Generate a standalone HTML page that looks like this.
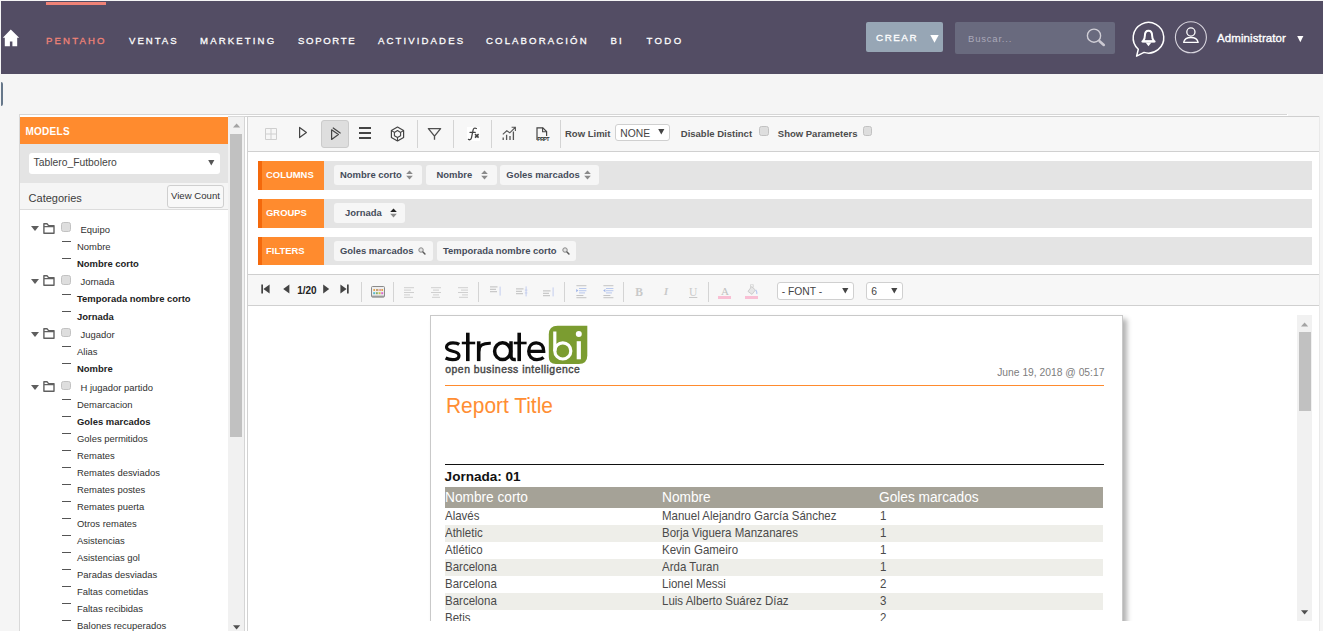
<!DOCTYPE html>
<html>
<head>
<meta charset="utf-8">
<title>Pentaho</title>
<style>
*{box-sizing:border-box;margin:0;padding:0}
html,body{width:1323px;height:631px;overflow:hidden;background:#f5f5f5;font-family:"Liberation Sans",sans-serif;}
.a{position:absolute}
.t{position:absolute;white-space:nowrap;line-height:14px;height:14px}
/* NAV */
#nav{left:1px;top:1px;width:1322px;height:73px;background:#534d64}
.nv{position:absolute;top:33px;height:16px;line-height:16px;font-size:9.6px;color:#fff;white-space:nowrap;-webkit-text-stroke:0.28px currentColor}
/* LEFT PANEL */
.tr{position:absolute;left:77px;font-size:9.45px;color:#303030;white-space:nowrap;height:14px;line-height:14px}
.tr.f{left:80.5px}
.tr.b{font-weight:bold;color:#222}
.dash{position:absolute;left:62px;width:9px;height:1px;background:#555}
.tri{position:absolute;left:31.2px;width:0;height:0;border-left:4.2px solid transparent;border-right:4.2px solid transparent;border-top:5.2px solid #5e5e5e}
.fold{position:absolute;left:42.6px;width:12px;height:11px}
.cb{position:absolute;width:9.6px;height:9.6px;border:1px solid #c2c2c2;border-radius:2.5px;background:#dedede}
/* RIGHT */
.sep{position:absolute;width:1px;background:#d4d4d4}
.lbl{position:absolute;font-size:9.5px;font-weight:bold;color:#4c4c4c;white-space:nowrap;height:14px;line-height:14px}
.bar{position:absolute;left:324px;width:988px;background:#e4e4e4}
.tag{position:absolute;left:258px;width:66px;background:#ff8b2e;border-left:4px solid #f4690c}
.tagt{position:absolute;left:266px;font-size:9.45px;font-weight:bold;color:#fff;white-space:nowrap;height:14px;line-height:14px}
.pill{position:absolute;background:#f6f6f6;border-radius:3px;height:20px}
.pt{position:absolute;font-size:9.45px;font-weight:bold;color:#454c5a;white-space:nowrap;height:14px;line-height:14px}
.sel{position:absolute;background:#fff;border:1px solid #d0d0d0;border-radius:3px}
/* REPORT */
.row{position:absolute;left:445px;width:658px;height:17px}
.c{position:absolute;font-size:11.9px;transform:scaleX(.967);transform-origin:0 0;color:#4a4a4a;white-space:nowrap;height:17px;line-height:17px}
.h{position:absolute;font-size:13.85px;transform:scaleX(.989);transform-origin:0 0;color:#fff;white-space:nowrap;height:21px;line-height:21px}
</style>
</head>
<body>
<!-- ========== NAV ========== -->
<div id="nav" class="a"></div>
<div class="a" style="left:46px;top:2px;width:60px;height:3px;background:#f08377"></div>
<svg class="a" style="left:2px;top:29px" width="18" height="18" viewBox="0 0 18 18"><path d="M8.8 0.6 L0.8 8.8 L2.8 8.8 L2.8 17.2 L7.9 17.2 L7.9 12.4 L10.4 12.4 L10.4 17.2 L15.2 17.2 L15.2 8.8 L17.2 8.8 Z" fill="#fff"/></svg>
<div class="nv" style="left:46px;color:#f08377;letter-spacing:2.15px" id="n1">PENTAHO</div>
<div class="nv" style="left:129px;letter-spacing:1.99px" id="n2">VENTAS</div>
<div class="nv" style="left:200px;letter-spacing:2.14px" id="n3">MARKETING</div>
<div class="nv" style="left:298px;letter-spacing:1.64px" id="n4">SOPORTE</div>
<div class="nv" style="left:378px;letter-spacing:2.11px" id="n5">ACTIVIDADES</div>
<div class="nv" style="left:486px;letter-spacing:2.12px" id="n6">COLABORACIÓN</div>
<div class="nv" style="left:610.5px;letter-spacing:2.02px" id="n7">BI</div>
<div class="nv" style="left:646.5px;letter-spacing:2.35px" id="n8">TODO</div>
<!-- CREAR -->
<div class="a" style="left:866px;top:22px;width:77px;height:30px;background:#97a6b5;border-radius:2px"></div>
<div class="t" style="left:876px;top:30.5px;font-size:9.9px;color:#fff;letter-spacing:1.5px;-webkit-text-stroke:0.28px #fff">CREAR</div>
<svg class="a" style="left:929.5px;top:35px" width="9" height="8" viewBox="0 0 9 8"><path d="M0.3 0 L8.7 0 L4.5 7.8 Z" fill="#fff"/></svg>
<!-- search -->
<div class="a" style="left:955px;top:22px;width:160px;height:32px;background:#696a7e;border-radius:2px"></div>
<div class="t" style="left:968px;top:31.6px;font-size:9.5px;color:#aaa9b9;letter-spacing:0.8px" id="bus">Buscar...</div>
<svg class="a" style="left:1085px;top:27px" width="23" height="22" viewBox="0 0 23 22"><circle cx="9" cy="8.7" r="6.6" fill="none" stroke="#d0ced6" stroke-width="1.4"/><path d="M14.6 14.2 L18.8 17.9" stroke="#cbc9d2" stroke-width="2.6" stroke-linecap="round"/></svg>
<!-- bell bubble -->
<svg class="a" style="left:1130px;top:19px" width="38" height="40" viewBox="0 0 38 40"><path d="M8.3 30.2 A15.3 15.3 0 1 1 14 33.4 L6.6 37.2 Z" fill="none" stroke="#fff" stroke-width="1.5" stroke-linejoin="round"/><path d="M13 22.3 C14.6 20.6 14.9 19 14.9 16.6 C14.9 13.6 16 11.7 18.5 11.7 C21 11.7 22.1 13.6 22.1 16.6 C22.1 19 22.4 20.6 24 22.3 Z" fill="none" stroke="#fff" stroke-width="2" stroke-linejoin="round"/><path d="M12.4 22.6 H24.6" stroke="#fff" stroke-width="2" stroke-linecap="round"/><path d="M15.6 23.4 L21.4 23.4 L18.5 27.2 Z" fill="#fff"/></svg>
<!-- user -->
<svg class="a" style="left:1173px;top:19px" width="36" height="38" viewBox="0 0 36 38"><circle cx="17.9" cy="18.3" r="15.5" fill="none" stroke="#d8d5de" stroke-width="1.1"/><circle cx="17.9" cy="13" r="4.1" fill="none" stroke="#fff" stroke-width="1.3"/><path d="M10.6 23.3 C11.5 19.7 14.5 18.5 17.9 18.5 C21.3 18.5 24.3 19.7 25.2 23.3 Z" fill="none" stroke="#fff" stroke-width="1.3" stroke-linejoin="round"/></svg>
<div class="t" style="left:1217px;top:31.4px;font-size:11.5px;color:#fff;letter-spacing:0.1px;-webkit-text-stroke:0.35px #fff" id="adm">Administrator</div>
<svg class="a" style="left:1296.5px;top:36.2px" width="7" height="7" viewBox="0 0 7 7"><path d="M0.2 0 L6.4 0 L3.3 6.2 Z" fill="#fff"/></svg>

<!-- small toggle -->
<div class="a" style="left:1px;top:82px;width:2.2px;height:24px;background:#66778a;border-radius:0 2px 2px 0"></div>
<!-- LEFT PANEL -->
<div class="a" style="left:19px;top:114px;width:1268px;height:517px;background:#fff;border-left:1px solid #d9d9d9;border-top:1px solid #d6d6d6"></div>
<div class="a" style="left:20px;top:117px;width:208px;height:27px;background:#ff8b2e"></div>
<div class="t" style="left:25.4px;top:125px;font-size:10px;letter-spacing:0.3px;font-weight:bold;color:#fff">MODELS</div>
<div class="a" style="left:20px;top:144px;width:208px;height:39px;background:#e4e4e4"></div>
<div class="a" style="left:28.5px;top:153px;width:191px;height:21px;background:#fff;border-radius:3px"></div>
<div class="t" style="left:33.5px;top:156.3px;font-size:10.35px;color:#444">Tablero_Futbolero</div>
<svg class="a" style="left:208px;top:160px" width="7" height="6" viewBox="0 0 7 6"><path d="M0.2 0 L6.4 0 L3.3 5.6 Z" fill="#555"/></svg>
<div class="a" style="left:20px;top:183px;width:208px;height:27px;background:#f5f5f5;border-bottom:1px solid #dcdcdc"></div>
<div class="t" style="left:28.6px;top:190.7px;font-size:11px;color:#3c3c3c">Categories</div>
<div class="a" style="left:167px;top:185px;width:57px;height:23px;background:#f8f8f8;border:1px solid #cfcfcf;border-radius:3px"></div>
<div class="t" style="left:171px;top:188.5px;font-size:9.6px;color:#333">View Count</div>
<div class="tri" style="top:226.4px"></div>
<svg class="fold" style="top:222.6px" viewBox="0 0 12 11"><path d="M0.9 10.2 L0.9 0.8 L4 0.8 L5.6 2.6 L11 2.6 L11 10.2 Z M0.9 3.6 L11 3.6" fill="none" stroke="#606060" stroke-width="1.4" stroke-linejoin="round"/></svg>
<div class="cb" style="left:61.2px;top:222.4px"></div>
<div class="tr f" style="top:222.6px">Equipo</div>
<div class="dash" style="top:241.2px"></div>
<div class="tr" style="top:240.0px">Nombre</div>
<div class="dash" style="top:258.2px"></div>
<div class="tr b" style="top:257.0px">Nombre corto</div>
<div class="tri" style="top:279.2px"></div>
<svg class="fold" style="top:275.4px" viewBox="0 0 12 11"><path d="M0.9 10.2 L0.9 0.8 L4 0.8 L5.6 2.6 L11 2.6 L11 10.2 Z M0.9 3.6 L11 3.6" fill="none" stroke="#606060" stroke-width="1.4" stroke-linejoin="round"/></svg>
<div class="cb" style="left:61.2px;top:275.2px"></div>
<div class="tr f" style="top:275.4px">Jornada</div>
<div class="dash" style="top:293.6px"></div>
<div class="tr b" style="top:292.4px">Temporada nombre corto</div>
<div class="dash" style="top:310.8px"></div>
<div class="tr b" style="top:309.6px">Jornada</div>
<div class="tri" style="top:331.8px"></div>
<svg class="fold" style="top:328.0px" viewBox="0 0 12 11"><path d="M0.9 10.2 L0.9 0.8 L4 0.8 L5.6 2.6 L11 2.6 L11 10.2 Z M0.9 3.6 L11 3.6" fill="none" stroke="#606060" stroke-width="1.4" stroke-linejoin="round"/></svg>
<div class="cb" style="left:61.2px;top:327.8px"></div>
<div class="tr f" style="top:328.0px">Jugador</div>
<div class="dash" style="top:346.2px"></div>
<div class="tr" style="top:345.0px">Alias</div>
<div class="dash" style="top:363.2px"></div>
<div class="tr b" style="top:362.0px">Nombre</div>
<div class="tri" style="top:384.8px"></div>
<svg class="fold" style="top:381.0px" viewBox="0 0 12 11"><path d="M0.9 10.2 L0.9 0.8 L4 0.8 L5.6 2.6 L11 2.6 L11 10.2 Z M0.9 3.6 L11 3.6" fill="none" stroke="#606060" stroke-width="1.4" stroke-linejoin="round"/></svg>
<div class="cb" style="left:61.2px;top:380.8px"></div>
<div class="tr f" style="top:381.0px">H jugador partido</div>
<div class="dash" style="top:399.2px"></div>
<div class="tr" style="top:398.0px">Demarcacion</div>
<div class="dash" style="top:416.2px"></div>
<div class="tr b" style="top:415.0px">Goles marcados</div>
<div class="dash" style="top:433.2px"></div>
<div class="tr" style="top:432.0px">Goles permitidos</div>
<div class="dash" style="top:450.2px"></div>
<div class="tr" style="top:449.0px">Remates</div>
<div class="dash" style="top:467.2px"></div>
<div class="tr" style="top:466.0px">Remates desviados</div>
<div class="dash" style="top:484.2px"></div>
<div class="tr" style="top:483.0px">Remates postes</div>
<div class="dash" style="top:501.2px"></div>
<div class="tr" style="top:500.0px">Remates puerta</div>
<div class="dash" style="top:518.2px"></div>
<div class="tr" style="top:517.0px">Otros remates</div>
<div class="dash" style="top:535.2px"></div>
<div class="tr" style="top:534.0px">Asistencias</div>
<div class="dash" style="top:552.2px"></div>
<div class="tr" style="top:551.0px">Asistencias gol</div>
<div class="dash" style="top:569.2px"></div>
<div class="tr" style="top:568.0px">Paradas desviadas</div>
<div class="dash" style="top:586.2px"></div>
<div class="tr" style="top:585.0px">Faltas cometidas</div>
<div class="dash" style="top:603.2px"></div>
<div class="tr" style="top:602.0px">Faltas recibidas</div>
<div class="dash" style="top:620.2px"></div>
<div class="tr" style="top:619.0px">Balones recuperados</div>
<div class="a" style="left:228px;top:116px;width:17px;height:515px;background:#f1f1f1;border-top:1px solid #d9d9d9;border-right:1px solid #d5d5d5"></div>
<div class="a" style="left:230px;top:134px;width:12.4px;height:303px;background:#c1c1c1"></div>
<svg class="a" style="left:233px;top:123px" width="8" height="5" viewBox="0 0 8 5"><path d="M0 4.6 L3.6 0.4 L7.2 4.6 Z" fill="#a3a3a3"/></svg>
<svg class="a" style="left:233px;top:624.5px" width="8" height="5" viewBox="0 0 8 5"><path d="M0 0.2 L7.2 0.2 L3.6 4.4 Z" fill="#505050"/></svg>
<!-- RIGHT PANEL -->
<div class="a" style="left:245px;top:116px;width:3px;height:1px;background:#d4d4d4"></div>
<div class="a" style="left:1287px;top:114px;width:1px;height:2px;background:#fff"></div>
<div class="a" style="left:247px;top:116px;width:1073px;height:515px;background:#fff;border-left:1px solid #d2d2d2;border-right:1px solid #e9e9e9"></div>
<div class="a" style="left:248px;top:116px;width:1071px;height:36px;background:#f7f7f7;border-top:1px solid #cfcfcf;border-bottom:1px solid #d0d0d0"></div>
<svg class="a" style="left:265px;top:128px" width="12" height="12" viewBox="0 0 12 12"><path d="M0.5 0.5 H11.5 V11.5 H0.5 Z M6 0.5 V11.5 M0.5 6 H11.5" fill="none" stroke="#cfcfcf" stroke-width="1"/></svg>
<svg class="a" style="left:298px;top:126px" width="10" height="13" viewBox="0 0 10 13"><path d="M1.6 1.4 L8.4 6.5 L1.6 11.6 Z" fill="none" stroke="#444" stroke-width="1.2" stroke-linejoin="round"/></svg>
<div class="a" style="left:321px;top:120px;width:28px;height:28px;background:#dedede;border:1px solid #cbcbcb;border-radius:3px"></div>
<svg class="a" style="left:329.5px;top:126.5px" width="12" height="14" viewBox="0 0 12 14"><path d="M1.6 2.8 L8.4 7.6 L1.6 12.4 Z" fill="none" stroke="#444" stroke-width="1.2" stroke-linejoin="round"/><path d="M3.2 1 L10.2 6" fill="none" stroke="#444" stroke-width="1.2" stroke-linecap="round"/></svg>
<div class="a" style="left:358.5px;top:127.4px;width:12.6px;height:1.6px;background:#454545"></div>
<div class="a" style="left:358.5px;top:132.2px;width:12.6px;height:1.6px;background:#454545"></div>
<div class="a" style="left:358.5px;top:137px;width:12.6px;height:1.6px;background:#454545"></div>
<svg class="a" style="left:390px;top:125.5px" width="15" height="16" viewBox="0 0 15 16"><path d="M7.5 1 L13.6 4.5 L13.6 11.5 L7.5 15 L1.4 11.5 L1.4 4.5 Z" fill="none" stroke="#444" stroke-width="1.2" stroke-linejoin="round"/><path d="M7.5 4.6 L10.6 6.4 L10.6 9.8 L7.5 11.6 L4.4 9.8 L4.4 6.4 Z M7.5 11.6 V15 M4.4 6.4 L1.4 4.5 M10.6 6.4 L13.6 4.5" fill="none" stroke="#444" stroke-width="1.1" stroke-linejoin="round"/></svg>
<div class="sep" style="left:417px;top:120px;height:28px"></div>
<div class="sep" style="left:453px;top:120px;height:28px"></div>
<div class="sep" style="left:491px;top:120px;height:28px"></div>
<div class="sep" style="left:560px;top:120px;height:28px"></div>
<svg class="a" style="left:427px;top:127px" width="15" height="14" viewBox="0 0 15 14"><path d="M1.4 1.6 L13.6 1.6 L7.5 9.2 Z M7.5 9.2 V12.8" fill="none" stroke="#505050" stroke-width="1.35" stroke-linejoin="round"/></svg>
<div class="a" style="left:467px;top:127px;width:13px;height:14px;background:#fff"></div>
<svg class="a" style="left:467px;top:127px" width="13" height="14" viewBox="0 0 13 14"><path d="M9.4 1.5 C7.6 0.5 6.4 1.4 6 3.4 L4.5 10.6 C4.1 12.6 2.9 13.2 1.4 12.4 M3 5.4 H8.2" fill="none" stroke="#444" stroke-width="1.25" stroke-linecap="round"/><path d="M8 7.2 L11.6 10.6 M11.6 7.2 L8 10.6" stroke="#444" stroke-width="1.6"/></svg>
<svg class="a" style="left:501.5px;top:126px" width="15" height="15" viewBox="0 0 15 15"><path d="M1.2 14 V11.4 M4.6 14 V8.8 M8 14 V10 M11.4 14 V5.6" stroke="#555" stroke-width="1.3" fill="none"/><path d="M0.8 8.4 L4.8 4.8 L7.8 6.8 L13 1.6 M9.6 1.2 H13.4 V5" stroke="#555" stroke-width="1.1" fill="none"/></svg>
<svg class="a" style="left:535.5px;top:126.5px" width="14" height="15" viewBox="0 0 14 15"><path d="M1 13 V0.8 H6.8 L10.6 4.6 V9" fill="none" stroke="#444" stroke-width="1.2"/><path d="M6.6 0.8 V4.8 H10.6" fill="none" stroke="#444" stroke-width="1.1"/><text x="1.2" y="14.2" font-family="Liberation Sans" font-size="5.4" font-weight="bold" fill="#333" textLength="12.4">PRPT</text></svg>
<div class="lbl" style="left:565px;top:126.8px">Row Limit</div>
<div class="sel" style="left:615px;top:124px;width:54.5px;height:17px"></div>
<div class="t" style="left:620.3px;top:126.7px;font-size:10.3px;color:#444">NONE</div>
<svg class="a" style="left:658px;top:129.2px" width="7" height="6" viewBox="0 0 7 6"><path d="M0.2 0 L6.4 0 L3.3 5.4 Z" fill="#444"/></svg>
<div class="lbl" style="left:680.8px;top:126.8px">Disable Distinct</div>
<div class="cb" style="left:759.3px;top:126.3px"></div>
<div class="lbl" style="left:777.8px;top:126.8px">Show Parameters</div>
<div class="cb" style="left:862.8px;top:126.3px"></div>
<div class="tag" style="top:161px;height:29px"></div>
<div class="bar" style="top:161px;height:29px"></div>
<div class="tagt" style="top:167.8px">COLUMNS</div>
<div class="tag" style="top:199px;height:29px"></div>
<div class="bar" style="top:199px;height:29px"></div>
<div class="tagt" style="top:205.8px">GROUPS</div>
<div class="tag" style="top:237px;height:28px"></div>
<div class="bar" style="top:237px;height:28px"></div>
<div class="tagt" style="top:243.6px">FILTERS</div>
<div class="pill" style="left:334px;top:165px;width:88px"></div><div class="pt" style="left:340px;top:168px">Nombre corto</div><svg class="a" style="left:406px;top:170px" width="7" height="10" viewBox="0 0 7 10"><path d="M0.2 4 L3.5 0.4 L6.8 4 Z" fill="#8a8a8a"/><path d="M0.2 5.8 L6.8 5.8 L3.5 9.4 Z" fill="#8a8a8a"/></svg>
<div class="pill" style="left:426px;top:165px;width:70.5px"></div><div class="pt" style="left:436.5px;top:168px">Nombre</div><svg class="a" style="left:481px;top:170px" width="7" height="10" viewBox="0 0 7 10"><path d="M0.2 4 L3.5 0.4 L6.8 4 Z" fill="#8a8a8a"/><path d="M0.2 5.8 L6.8 5.8 L3.5 9.4 Z" fill="#8a8a8a"/></svg>
<div class="pill" style="left:500.3px;top:165px;width:98.7px"></div><div class="pt" style="left:506.3px;top:168px">Goles marcados</div><svg class="a" style="left:583.6px;top:170px" width="7" height="10" viewBox="0 0 7 10"><path d="M0.2 4 L3.5 0.4 L6.8 4 Z" fill="#8a8a8a"/><path d="M0.2 5.8 L6.8 5.8 L3.5 9.4 Z" fill="#8a8a8a"/></svg>
<div class="pill" style="left:334px;top:203px;width:71.2px"></div><div class="pt" style="left:345px;top:206px">Jornada</div><svg class="a" style="left:390px;top:208px" width="7" height="10" viewBox="0 0 7 10"><path d="M0.2 4 L3.5 0.4 L6.8 4 Z" fill="#222"/><path d="M0.2 5.8 L6.8 5.8 L3.5 9.4 Z" fill="#8a8a8a"/></svg>
<div class="pill" style="left:334px;top:241px;width:99px"></div><div class="pt" style="left:340px;top:244px">Goles marcados</div><svg class="a" style="left:418px;top:246.5px" width="8" height="8" viewBox="0 0 9 9"><circle cx="3.4" cy="3.4" r="2.5" fill="#e4e4e4" stroke="#858585" stroke-width="1.1"/><path d="M5.6 5.6 L7.8 7.8" stroke="#5a5a5a" stroke-width="1.7" stroke-linecap="round"/></svg>
<div class="pill" style="left:437px;top:241px;width:139px"></div><div class="pt" style="left:443px;top:244px">Temporada nombre corto</div><svg class="a" style="left:561.5px;top:246.5px" width="8" height="8" viewBox="0 0 9 9"><circle cx="3.4" cy="3.4" r="2.5" fill="#e4e4e4" stroke="#858585" stroke-width="1.1"/><path d="M5.6 5.6 L7.8 7.8" stroke="#5a5a5a" stroke-width="1.7" stroke-linecap="round"/></svg>
<div class="a" style="left:248px;top:274px;width:1071px;height:32px;background:#f7f7f7;border-top:1px solid #cfcfcf;border-bottom:1px solid #d0d0d0"></div>
<svg class="a" style="left:260.5px;top:284px" width="9" height="10" viewBox="0 0 9 10"><path d="M0.3 0.4 H2 V9.4 H0.3 Z M8.6 0.4 V9.4 L2.4 4.9 Z" fill="#444"/></svg>
<svg class="a" style="left:282.5px;top:284px" width="7" height="10" viewBox="0 0 7 10"><path d="M6.4 0.4 V9.4 L0.2 4.9 Z" fill="#444"/></svg>
<div class="t" style="left:297.2px;top:283.7px;font-size:10px;font-weight:bold;color:#222">1/20</div>
<svg class="a" style="left:322.6px;top:284px" width="7" height="10" viewBox="0 0 7 10"><path d="M0.2 0.4 V9.4 L6.2 4.9 Z" fill="#444"/></svg>
<svg class="a" style="left:340.3px;top:284px" width="9" height="10" viewBox="0 0 9 10"><path d="M7 0.4 H8.7 V9.4 H7 Z M0.4 0.4 V9.4 L6.6 4.9 Z" fill="#444"/></svg>
<div class="sep" style="left:361px;top:282px;height:20px"></div>
<div class="sep" style="left:393px;top:282px;height:20px"></div>
<div class="sep" style="left:478px;top:282px;height:20px"></div>
<div class="sep" style="left:564px;top:282px;height:20px"></div>
<div class="sep" style="left:623px;top:282px;height:20px"></div>
<div class="sep" style="left:708px;top:282px;height:20px"></div>
<svg class="a" style="left:370.5px;top:286px" width="14" height="12" viewBox="0 0 14 12"><rect x="0.5" y="0.5" width="13" height="10.6" rx="1" fill="#eee" stroke="#8a8a8a" stroke-width="1"/><rect x="1" y="9.6" width="12" height="1.6" fill="#9a9a9a"/><rect x="2.4" y="3" width="1.6" height="2" fill="#e6a44a"/><rect x="5" y="3" width="2.4" height="2" fill="#c8a070"/><rect x="8.4" y="3" width="1.4" height="2" fill="#d88"/><rect x="10.4" y="3" width="1.6" height="2" fill="#e6a44a"/><rect x="2.2" y="6.2" width="2" height="2" fill="#5bc"/><rect x="5" y="6.2" width="1.8" height="2" fill="#8a6"/><rect x="7.6" y="6.2" width="2" height="2" fill="#c6c64a"/><rect x="10.2" y="6.2" width="2" height="2" fill="#d6c"/></svg>
<svg class="a" style="left:404px;top:287px" width="10" height="11" viewBox="0 0 10 11"><rect x="0" y="0.2" width="10" height="1" fill="#cfcfcf"/><rect x="0" y="2.6" width="7" height="1" fill="#cfcfcf"/><rect x="0" y="5.0" width="10" height="1" fill="#cfcfcf"/><rect x="0" y="7.3999999999999995" width="6" height="1" fill="#cfcfcf"/><rect x="0" y="9.799999999999999" width="9" height="1" fill="#cfcfcf"/></svg>
<svg class="a" style="left:431px;top:287px" width="10" height="11" viewBox="0 0 10 11"><rect x="0.0" y="0.2" width="10" height="1" fill="#cfcfcf"/><rect x="2.0" y="2.6" width="6" height="1" fill="#cfcfcf"/><rect x="0.0" y="5.0" width="10" height="1" fill="#cfcfcf"/><rect x="2.0" y="7.3999999999999995" width="6" height="1" fill="#cfcfcf"/><rect x="1.0" y="9.799999999999999" width="8" height="1" fill="#cfcfcf"/></svg>
<svg class="a" style="left:458px;top:287px" width="10" height="11" viewBox="0 0 10 11"><rect x="0" y="0.2" width="10" height="1" fill="#cfcfcf"/><rect x="3" y="2.6" width="7" height="1" fill="#cfcfcf"/><rect x="0" y="5.0" width="10" height="1" fill="#cfcfcf"/><rect x="4" y="7.3999999999999995" width="6" height="1" fill="#cfcfcf"/><rect x="1" y="9.799999999999999" width="9" height="1" fill="#cfcfcf"/></svg>
<svg class="a" style="left:490px;top:286px" width="12" height="12" viewBox="0 0 12 12"><rect x="0" y="0.4" width="7.5" height="1" fill="#bdbdbd"/><rect x="0" y="2.8" width="6" height="1" fill="#bdbdbd"/><rect x="0" y="5.2" width="7" height="1" fill="#bdbdbd"/><rect x="9.6" y="0.6" width="1" height="9" fill="#c3cdee"/></svg>
<svg class="a" style="left:516px;top:286px" width="12" height="12" viewBox="0 0 12 12"><rect x="0" y="2.4" width="7.5" height="1" fill="#bdbdbd"/><rect x="0" y="4.8" width="6" height="1" fill="#bdbdbd"/><rect x="0" y="7.2" width="7" height="1" fill="#bdbdbd"/><rect x="9.6" y="0.4" width="1" height="10" fill="#c3cdee"/><rect x="8.8" y="3.6" width="2.6" height="1" fill="#c3cdee"/><rect x="8.8" y="6.4" width="2.6" height="1" fill="#c3cdee"/></svg>
<svg class="a" style="left:543px;top:286px" width="12" height="12" viewBox="0 0 12 12"><rect x="0" y="4.4" width="7.5" height="1" fill="#bdbdbd"/><rect x="0" y="6.8" width="6" height="1" fill="#bdbdbd"/><rect x="0" y="9.2" width="7" height="1" fill="#bdbdbd"/><rect x="9.6" y="1.4" width="1" height="9" fill="#c3cdee"/></svg>
<svg class="a" style="left:575.8px;top:285px" width="11" height="14" viewBox="0 0 11 14"><rect x="0.4" y="0.2" width="10" height="1" fill="#c4c4c4"/><rect x="0.4" y="12.2" width="10" height="1" fill="#c4c4c4"/><rect x="0.4" y="10" width="7" height="1" fill="#c4c4c4"/><rect x="3" y="3" width="7.4" height="1" fill="#b9c9ee"/><rect x="3" y="5.2" width="7.4" height="1" fill="#b9c9ee"/><rect x="3" y="7.4" width="6" height="1" fill="#b9c9ee"/><path d="M0.2 4 L2.4 5.6 L0.2 7.2 Z" fill="#9fb4e8"/></svg>
<svg class="a" style="left:602.6px;top:285px" width="11" height="14" viewBox="0 0 11 14"><rect x="0.4" y="0.2" width="10" height="1" fill="#c4c4c4"/><rect x="0.4" y="12.2" width="10" height="1" fill="#c4c4c4"/><rect x="0.4" y="10" width="7" height="1" fill="#c4c4c4"/><rect x="3" y="3" width="7.4" height="1" fill="#b9c9ee"/><rect x="3" y="5.2" width="7.4" height="1" fill="#b9c9ee"/><rect x="3" y="7.4" width="6" height="1" fill="#b9c9ee"/><path d="M2.4 4 L0.2 5.6 L2.4 7.2 Z" fill="#9fb4e8"/></svg>
<div class="t" style="left:635.2px;top:285px;font-family:'Liberation Serif',serif;font-weight:bold;font-size:11.5px;color:#c9c9c9">B</div>
<div class="t" style="left:664px;top:285px;font-family:'Liberation Serif',serif;font-style:italic;font-weight:bold;font-size:10.5px;color:#c9c9c9">I</div>
<div class="t" style="left:689px;top:285px;font-family:'Liberation Serif',serif;font-size:11.5px;color:#c9c9c9;text-decoration:underline">U</div>
<div class="t" style="left:721px;top:283.5px;font-family:'Liberation Serif',serif;font-size:11px;color:#c0c0c0">A</div>
<div class="a" style="left:718px;top:296.2px;width:13px;height:2.6px;background:#f9bfd4"></div>
<svg class="a" style="left:746px;top:284px" width="12" height="12" viewBox="0 0 12 12"><path d="M2 7.4 L5.6 2.6 L9.4 6 L6 10.4 Z" fill="#e6e6e6" stroke="#c8c8c8" stroke-width="0.9"/><path d="M4.6 4 V0.8 A1.4 1.4 0 0 1 7.2 0.8 V3.6" fill="none" stroke="#cfcfcf" stroke-width="0.9"/><path d="M9.6 5.8 Q11.4 8 10.6 10" fill="none" stroke="#b9c9ee" stroke-width="1.2"/></svg>
<div class="a" style="left:745px;top:296.2px;width:13px;height:2.6px;background:#f9bfd4"></div>
<div class="sel" style="left:776.5px;top:282px;width:77px;height:17.5px"></div>
<div class="t" style="left:781.7px;top:284.8px;font-size:10.3px;color:#444">- FONT -</div>
<svg class="a" style="left:842.3px;top:287.8px" width="7" height="6" viewBox="0 0 7 6"><path d="M0.2 0 L6.4 0 L3.3 5.4 Z" fill="#444"/></svg>
<div class="sel" style="left:865.5px;top:282px;width:37px;height:17.5px"></div>
<div class="t" style="left:871.2px;top:284.8px;font-size:10.3px;color:#444">6</div>
<svg class="a" style="left:891px;top:287.8px" width="7" height="6" viewBox="0 0 7 6"><path d="M0.2 0 L6.4 0 L3.3 5.4 Z" fill="#444"/></svg>
<!-- REPORT -->
<div class="a" id="vp" style="left:248px;top:306px;width:1049px;height:315px;overflow:hidden">
<div class="a" style="left:182px;top:9px;width:693px;height:400px;background:#fff;border:1px solid #c9c9c9;box-shadow:4px 4px 5px rgba(0,0,0,0.3)"></div>
<svg class="a" style="left:192px;top:16px" width="150" height="54" viewBox="0 0 150 54"><g fill="none" stroke="#0a0a0a" stroke-width="3.5">
<path d="M19.2 22.4 C17.6 21.2 15.6 20.8 13 20.8 C9 20.8 6.5 22.5 6.5 25.1 C6.5 27.7 9.4 28.6 12.7 29.3 C16 30 19 31 19 33.7 C19 36.4 16.2 37.6 12.5 37.6 C9.8 37.6 7.6 37.1 5.6 36" stroke-width="3.2"/>
<path d="M27.8 10.7 V39.1" stroke-width="3.6"/><path d="M21.8 21 H35.2" stroke-width="2.6"/>
<path d="M38.7 19.3 V39.1" stroke-width="3.6"/><path d="M38.7 29.5 C38.7 23.6 42.8 21 50.8 21.2" stroke-width="3"/>
<ellipse cx="62.6" cy="29.2" rx="8" ry="8.4"/>
<path d="M71 19.3 V33.8 C71 36.8 72.4 37.8 75.8 37.5"/>
<path d="M79.2 10.7 V39.1" stroke-width="3.6"/><path d="M73.8 21 H86.6" stroke-width="2.6"/>
<path d="M88.8 29.3 H103.7 C103.7 23.6 100.6 20.9 96.3 20.9 C91.6 20.9 88.7 24.4 88.7 29.3 C88.7 34.4 91.9 37.6 96.9 37.6 C99.6 37.6 101.9 37 103.6 35.6" stroke-width="3.3"/>
</g>
<path d="M117.6 3.8 H147.3 V33.6 Q147.3 42.1 138.8 42.1 H115.8 Q108.8 42.1 108.8 35.1 V12.6 Q108.8 3.8 117.6 3.8 Z" fill="#7b9c30"/>
<g fill="none" stroke="#fff" stroke-width="3.2">
<path d="M114.8 9.5 V29"/><ellipse cx="122.8" cy="28.9" rx="8" ry="8.1"/>
<path d="M138.8 19.2 V37.3" stroke-width="4.2"/>
</g>
<circle cx="138.8" cy="11.9" r="3" fill="#fff"/></svg>
<div class="t" style="left:197.3px;top:56.5px;font-size:10.4px;color:#484848;letter-spacing:0.5px;-webkit-text-stroke:0.42px #484848" id="tag">open business intelligence</div>
<div class="t" style="left:749.2px;top:60px;font-size:10.3px;color:#7d7d7d" id="date">June 19, 2018 @ 05:17</div>
<div class="a" style="left:196.5px;top:79px;width:659px;height:1px;background:#ff8b2e"></div>
<div class="t" style="left:198px;top:87px;font-size:21.4px;transform:scaleX(.978);transform-origin:0 0;color:#ff8e33;height:26px;line-height:26px" id="rt">Report Title</div>
<div class="a" style="left:196.5px;top:158px;width:659px;height:1px;background:#111"></div>
<div class="t" style="left:196.60000000000002px;top:161.5px;font-size:13.55px;font-weight:bold;color:#111;height:18px;line-height:18px" id="jor">Jornada: 01</div>
<div class="a" style="left:196.60000000000002px;top:181px;width:658.6px;height:20.7px;background:#a5a297"></div>
<div class="h" style="left:197.2px;top:181px">Nombre corto</div>
<div class="h" style="left:414.29999999999995px;top:181px">Nombre</div>
<div class="h" style="left:631px;top:181px">Goles marcados</div>
<div class="c" style="left:196.8px;top:202.0px">Alavés</div>
<div class="c" style="left:414.29999999999995px;top:202.0px">Manuel Alejandro García Sánchez</div>
<div class="c" style="left:631.6px;top:202.0px">1</div>
<div class="a" style="left:196.60000000000002px;top:218.7px;width:658.6px;height:17.03px;background:#eeeee9"></div>
<div class="c" style="left:196.8px;top:219.0px">Athletic</div>
<div class="c" style="left:414.29999999999995px;top:219.0px">Borja Viguera Manzanares</div>
<div class="c" style="left:631.6px;top:219.0px">1</div>
<div class="c" style="left:196.8px;top:236.1px">Atlético</div>
<div class="c" style="left:414.29999999999995px;top:236.1px">Kevin Gameiro</div>
<div class="c" style="left:631.6px;top:236.1px">1</div>
<div class="a" style="left:196.60000000000002px;top:252.8px;width:658.6px;height:17.03px;background:#eeeee9"></div>
<div class="c" style="left:196.8px;top:253.1px">Barcelona</div>
<div class="c" style="left:414.29999999999995px;top:253.1px">Arda Turan</div>
<div class="c" style="left:631.6px;top:253.1px">1</div>
<div class="c" style="left:196.8px;top:270.1px">Barcelona</div>
<div class="c" style="left:414.29999999999995px;top:270.1px">Lionel Messi</div>
<div class="c" style="left:631.6px;top:270.1px">2</div>
<div class="a" style="left:196.60000000000002px;top:286.9px;width:658.6px;height:17.03px;background:#eeeee9"></div>
<div class="c" style="left:196.8px;top:287.2px">Barcelona</div>
<div class="c" style="left:414.29999999999995px;top:287.2px">Luis Alberto Suárez Díaz</div>
<div class="c" style="left:631.6px;top:287.2px">3</div>
<div class="c" style="left:196.8px;top:304.2px">Betis</div>
<div class="c" style="left:631.6px;top:304.2px">2</div>
</div>
<div class="a" style="left:1297px;top:315px;width:15px;height:306px;background:#f1f1f1"></div>
<div class="a" style="left:1299px;top:332px;width:12px;height:79px;background:#c1c1c1"></div>
<svg class="a" style="left:1301px;top:321.5px" width="8" height="5" viewBox="0 0 8 5"><path d="M0 4.6 L3.6 0.4 L7.2 4.6 Z" fill="#a3a3a3"/></svg>
<svg class="a" style="left:1301px;top:609.5px" width="8" height="5" viewBox="0 0 8 5"><path d="M0 0.2 L7.2 0.2 L3.6 4.4 Z" fill="#505050"/></svg>
</body>
</html>
